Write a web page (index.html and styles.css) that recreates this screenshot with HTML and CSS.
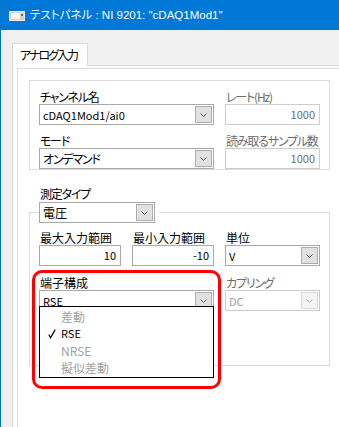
FILE: index.html
```html
<!DOCTYPE html>
<html lang="ja">
<head>
    <meta charset="UTF-8">
    <meta name="viewport" content="width=device-width, initial-scale=1.0">
    <title>テストパネル</title>
    <link rel="stylesheet" href="styles.css">
</head>
<body>
    <div class="titlebar">
        <svg class="app-icon" width="16" height="10" viewBox="0 0 16 10">
            <rect x="0.5" y="0.5" width="15" height="9" fill="#d4d4d4" stroke="#ececec"/>
            <rect x="2" y="2" width="9" height="6" fill="#f6f6f6"/>
            <rect x="12" y="3" width="2" height="2" fill="#6e6e6e"/>
        </svg>
        <span class="title">テストパネル : NI 9201: "cDAQ1Mod1"</span>
    </div>

    <div class="client">
        <div class="tabstrip">
            <div class="tab">アナログ入力</div>
        </div>

        <div class="tabpage">
            <div class="panel">

                <!-- チャンネル設定 -->
                <div class="group channel-group">
                    <div class="field">
                        <label class="kana">チャンネル名</label>
                        <div class="combo">
                            <span class="combo-text">cDAQ1Mod1/ai0</span>
                            <span class="drop-btn"><svg width="7" height="4" viewBox="0 0 7 4"><path d="M0.5 0.5 L3.5 3.5 L6.5 0.5" fill="none" stroke="#606060"/></svg></span>
                        </div>
                    </div>
                    <div class="field disabled">
                        <label class="kana">レート(Hz)</label>
                        <div class="textbox">1000</div>
                    </div>
                    <div class="field">
                        <label class="kana">モード</label>
                        <div class="combo">
                            <span class="combo-text jp kana">オンデマンド</span>
                            <span class="drop-btn"><svg width="7" height="4" viewBox="0 0 7 4"><path d="M0.5 0.5 L3.5 3.5 L6.5 0.5" fill="none" stroke="#606060"/></svg></span>
                        </div>
                    </div>
                    <div class="field disabled">
                        <label class="kana">読み取るサンプル数</label>
                        <div class="textbox">1000</div>
                    </div>
                </div>

                <!-- 測定タイプ -->
                <div class="measure-label kana">測定タイプ</div>
                <fieldset class="group measure-group">
                    <legend>
                        <div class="combo measure-combo">
                            <span class="combo-text jp">電圧</span>
                            <span class="drop-btn"><svg width="7" height="4" viewBox="0 0 7 4"><path d="M0.5 0.5 L3.5 3.5 L6.5 0.5" fill="none" stroke="#606060"/></svg></span>
                        </div>
                    </legend>

                    <div class="measure-grid">
                        <div class="field">
                            <label>最大入力範囲</label>
                            <div class="textbox">10</div>
                        </div>
                        <div class="field">
                            <label>最小入力範囲</label>
                            <div class="textbox">-10</div>
                        </div>
                        <div class="field">
                            <label>単位</label>
                            <div class="combo">
                                <span class="combo-text">V</span>
                                <span class="drop-btn"><svg width="7" height="4" viewBox="0 0 7 4"><path d="M0.5 0.5 L3.5 3.5 L6.5 0.5" fill="none" stroke="#606060"/></svg></span>
                            </div>
                        </div>

                        <div class="field terminal">
                            <label>端子構成</label>
                            <div class="combo">
                                <span class="combo-text">RSE</span>
                                <span class="drop-btn"><svg width="7" height="4" viewBox="0 0 7 4"><path d="M0.5 0.5 L3.5 3.5 L6.5 0.5" fill="none" stroke="#606060"/></svg></span>
                            </div>
                            <ul class="dropdown-list">
                                <li class="off">差動</li>
                                <li class="checked">
                                    <svg class="check" width="8" height="10" viewBox="0 0 8 10"><path d="M0.8 5.5 L2.6 8.8 L7.2 0.6" fill="none" stroke="#000" stroke-width="1.2"/></svg>RSE
                                </li>
                                <li class="off">NRSE</li>
                                <li class="off">擬似差動</li>
                            </ul>
                            <div class="highlight"></div>
                        </div>
                        <div class="field disabled">
                            <label class="kana">カプリング</label>
                            <div class="combo">
                                <span class="combo-text">DC</span>
                                <span class="drop-btn"><svg width="7" height="4" viewBox="0 0 7 4"><path d="M0.5 0.5 L3.5 3.5 L6.5 0.5" fill="none" stroke="#b8b8b8"/></svg></span>
                            </div>
                        </div>
                    </div>
                </fieldset>

            </div>
        </div>
    </div>
</body>
</html>
```

FILE: styles.css
```css
/* ウィンドウ全体 */
* {
    box-sizing: border-box;
}

body {
    margin: 0;
    width: 339px;
    height: 427px;
    overflow: hidden;
    background-color: #f0f0f0;
    font-family: "Noto Sans CJK JP", sans-serif;
    font-size: 12px;
    font-feature-settings: "palt";
    color: #000;
}

.kana {
    letter-spacing: -1.2px;
}

/* タイトルバー */
.titlebar {
    height: 30px;
    background-color: #0078d7;
    color: #fff;
    display: flex;
    align-items: center;
    gap: 5px;
    padding-left: 9px;
}

.app-icon {
    display: block;
    margin-top: 2px;
}

.title {
    font-family: "Liberation Sans", "Noto Sans CJK JP", sans-serif;
    font-size: 11.5px;
    line-height: 14px;
    white-space: nowrap;
}

/* クライアント領域 */
.client {
    height: 397px;
    border-left: 1px solid #0078d7;
    padding: 13px 0 0 11px;
}

.tabstrip {
    display: flex;
    height: 22px;
}

.tab {
    position: relative;
    z-index: 1;
    width: 76px;
    height: 23px;
    padding-left: 7px;
    border: 1px solid #d9d9d9;
    border-bottom: none;
    background-color: #fff;
    line-height: 21px;
    white-space: nowrap;
    letter-spacing: -2px;
}

.tabpage {
    height: 362px;
    border-top: 1px solid #d9d9d9;
    border-left: 1px solid #d9d9d9;
    background-color: #fff;
    padding: 2px 0 0 4px;
}

.panel {
    height: 100%;
    border-top: 1px solid #dcdcdc;
    border-left: 1px solid #dcdcdc;
    padding: 11px 0 0 11px;
}

/* グループボックス */
.group {
    width: 301px;
    border: 1px solid #dcdcdc;
}

.channel-group {
    display: grid;
    grid-template-columns: 175px 95px;
    column-gap: 11px;
    row-gap: 9px;
    padding: 9px 0 0 9px;
    height: 90px;
}

.field {
    display: flex;
    flex-direction: column;
}

.field label {
    height: 14px;
    line-height: 14px;
    padding-left: 1px;
    white-space: nowrap;
}

.field.disabled label {
    color: #6d6d6d;
}

/* コンボボックス */
.combo {
    height: 21px;
    display: flex;
    align-items: center;
    border: 1px solid #a9a9a9;
    background-color: #fff;
    padding: 0 1px 0 3px;
}

.combo-text {
    flex: 1;
    font-size: 11px;
    white-space: nowrap;
}

.combo-text.jp {
    font-size: 12px;
}

.drop-btn {
    width: 17px;
    height: 17px;
    display: flex;
    align-items: center;
    justify-content: center;
    border: 1px solid #adadad;
    background-color: #e1e1e1;
}

.field.disabled .combo {
    border-color: #cccccc;
    background-color: #fff;
    color: #a0a0a0;
}

.field.disabled .drop-btn {
    border-color: #d9d9d9;
    background-color: #f4f4f4;
}

/* テキストボックス */
.textbox {
    height: 21px;
    border: 1px solid #a9a9a9;
    background-color: #fff;
    padding-right: 4px;
    text-align: right;
    font-size: 11px;
    line-height: 19px;
}

.field.disabled .textbox {
    border-color: #cccccc;
    color: #6d6d6d;
}

/* 測定タイプ */
.measure-label {
    margin: 17px 0 1px 11px;
    height: 14px;
    line-height: 14px;
}

.measure-group {
    margin: 0;
    min-width: 0;
    padding: 0 9px 54px 9px;
}

.measure-group legend {
    padding: 0 4px 0 0;
}

.measure-combo {
    width: 116px;
}

.measure-grid {
    display: grid;
    grid-template-columns: 82px 82px 95px;
    column-gap: 11px;
    row-gap: 10px;
    margin-top: 8px;
}

.terminal {
    grid-column: span 2;
    position: relative;
}

/* ドロップダウンリスト */
.dropdown-list {
    position: absolute;
    top: 30px;
    left: 0;
    width: 175px;
    height: 72px;
    margin: 0;
    padding: 1px 0 0 0;
    list-style: none;
    border: 1px solid #000;
    background-color: #fff;
    z-index: 2;
}

.dropdown-list li {
    position: relative;
    height: 17px;
    line-height: 17px;
    padding-left: 21px;
    font-size: 11px;
}

.dropdown-list li.off {
    color: #a0a0a0;
    font-size: 12px;
}

.dropdown-list li:last-child {
    font-size: 12px;
}

.check {
    position: absolute;
    left: 8px;
    top: 4px;
}

/* 赤枠の注釈 */
.highlight {
    position: absolute;
    left: -7px;
    top: -6px;
    width: 189px;
    height: 119px;
    border: 3px solid #ff0000;
    border-radius: 10px;
    z-index: 3;
}
```
